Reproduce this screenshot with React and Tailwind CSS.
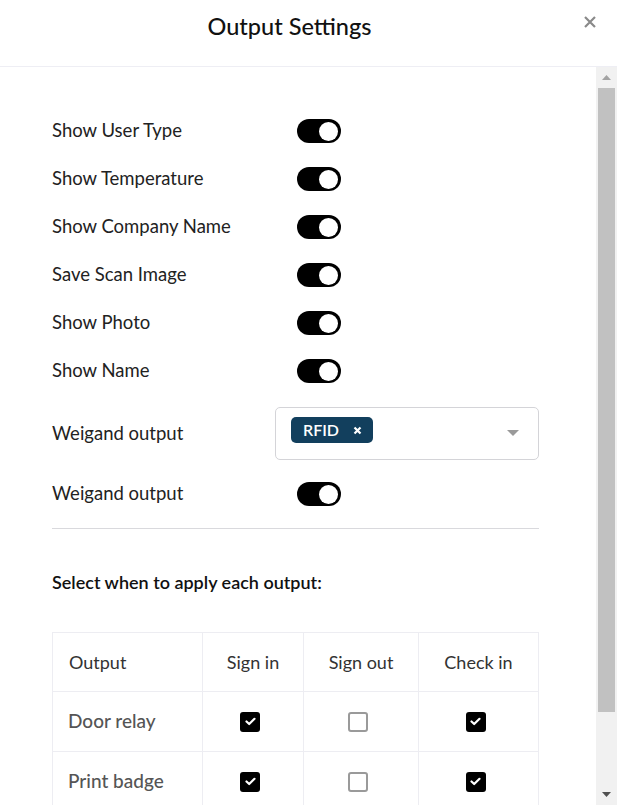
import React from "react";

const font = { fontFamily: "Lato, 'Noto Sans', sans-serif" };

function Toggle() {
  return (
    <div className="w-[44px] h-[24px] rounded-full bg-black flex items-center justify-end pr-[3px]">
      <div className="w-[19px] h-[19px] rounded-full bg-white" />
    </div>
  );
}

function ToggleRow({ label }) {
  return (
    <div className="flex items-center h-[48px]">
      <div className="w-[245px] text-[18.5px] text-[#222]">{label}</div>
      <Toggle />
    </div>
  );
}

function Checked() {
  return (
    <div className="w-[20px] h-[20px] rounded-[3px] bg-black flex items-center justify-center">
      <svg width="11" height="9" viewBox="0 0 11 9">
        <path d="M1.5 4.5 L4.2 7 L9.5 1.8" stroke="white" strokeWidth="2.2" fill="none" strokeLinecap="round" strokeLinejoin="round" />
      </svg>
    </div>
  );
}

function Unchecked() {
  return <div className="w-[20px] h-[20px] rounded-[3px] border-2 border-[#9a9a9a] bg-white" />;
}

export default function App() {
  const rows = ["Door relay", "Print badge"];
  return (
    <div style={font} className="w-[617px] h-[805px] bg-white flex flex-col overflow-hidden">
      <div className="h-[67px] shrink-0 border-b border-[#eeeef4] flex items-center relative">
        <div className="w-full text-center text-[23.5px] font-medium text-[#111] pr-[38px] pb-[12px]">Output Settings</div>
        <svg className="absolute left-[584px] top-[16px]" width="12" height="12" viewBox="0 0 12 12">
          <path d="M1 1 L11 11 M11 1 L1 11" stroke="#8a8a8a" strokeWidth="2.2" />
        </svg>
      </div>
      <div className="flex-1 flex min-h-0">
        <div className="flex-1 overflow-hidden pl-[52px] pr-[57px] pt-[40px]">
          <ToggleRow label="Show User Type" />
          <ToggleRow label="Show Temperature" />
          <ToggleRow label="Show Company Name" />
          <ToggleRow label="Save Scan Image" />
          <ToggleRow label="Show Photo" />
          <ToggleRow label="Show Name" />
          <div className="flex items-center mt-[12px] h-[53px]">
            <div className="w-[223px] text-[18.5px] text-[#222]">Weigand output</div>
            <div className="flex-1 h-[53px] rounded-[5px] border border-[#d4d4d8] flex items-start pt-[9px] pl-[15px] pr-[19px]">
              <div className="h-[26px] rounded-[5px] bg-[#123f5d] text-white flex items-center pl-[12px] pr-[11px] text-[16px] font-semibold">
                <span>RFID</span>
                <svg className="ml-[14px]" width="9" height="9" viewBox="0 0 9 9">
                  <path d="M1.5 1.5 L7.5 7.5 M7.5 1.5 L1.5 7.5" stroke="white" strokeWidth="2.2" />
                </svg>
              </div>
              <div className="flex-1" />
              <svg className="mt-[13px]" width="12" height="6" viewBox="0 0 12 6">
                <path d="M0 0 L12 0 L6 6 Z" fill="#9a9a9a" />
              </svg>
            </div>
          </div>
          <div className="mt-[10px]">
            <ToggleRow label="Weigand output" />
          </div>
          <div className="mt-[10px] border-t border-[#d9d9dd]" />
          <div className="mt-[41px] text-[18px] font-semibold text-[#111] leading-[24px]">Select when to apply each output:</div>
          <table className="mt-[38px] w-[487px] border-collapse">
            <thead>
              <tr className="h-[59px]">
                <th className="w-[150px] border border-[#ededf2] text-left pl-[16px] font-normal text-[18px] text-[#333]">Output</th>
                <th className="w-[101px] border border-[#ededf2] font-normal text-[18px] text-[#333]">Sign in</th>
                <th className="w-[115px] border border-[#ededf2] font-normal text-[18px] text-[#333]">Sign out</th>
                <th className="w-[120px] border border-[#ededf2] font-normal text-[18px] text-[#333]">Check in</th>
              </tr>
            </thead>
            <tbody>
              {rows.map((r) => (
                <tr key={r} className="h-[60px]">
                  <td className="border border-[#ededf2] pl-[15px] text-[19px] text-[#555] font-medium">{r}</td>
                  <td className="border border-[#ededf2]">
                    <div className="flex justify-center pr-[6px]"><Checked /></div>
                  </td>
                  <td className="border border-[#ededf2]">
                    <div className="flex justify-center pr-[6px]"><Unchecked /></div>
                  </td>
                  <td className="border border-[#ededf2]">
                    <div className="flex justify-center pr-[6px]"><Checked /></div>
                  </td>
                </tr>
              ))}
            </tbody>
          </table>
        </div>
        <div className="w-[21px] shrink-0 bg-[#f1f1f1] flex flex-col items-center">
          <div className="h-[21px] flex items-center justify-center">
            <svg width="9" height="5" viewBox="0 0 9 5"><path d="M0 5 L9 5 L4.5 0 Z" fill="#a3a3a3" /></svg>
          </div>
          <div className="w-[17px] h-[624px] bg-[#c1c1c1]" />
          <div className="flex-1" />
          <div className="h-[21px] flex items-center justify-center">
            <svg width="9" height="5" viewBox="0 0 9 5"><path d="M0 0 L9 0 L4.5 5 Z" fill="#505050" /></svg>
          </div>
        </div>
      </div>
    </div>
  );
}
